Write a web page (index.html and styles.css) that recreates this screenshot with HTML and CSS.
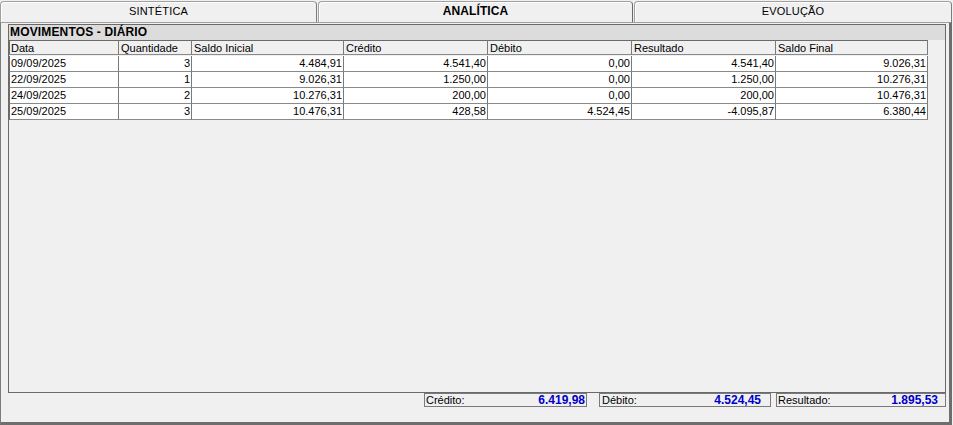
FILE: index.html
```html
<!DOCTYPE html>
<html lang="pt-BR">
<head>
<meta charset="utf-8">
<title>Movimentos - Diário</title>
<link rel="stylesheet" href="styles.css">
</head>
<body>
<div class="tabs">
  <div class="tab tab-1">SINTÉTICA</div>
  <div class="tab tab-2 active">ANALÍTICA</div>
  <div class="tab tab-3">EVOLUÇÃO</div>
</div>
<div class="panel">
  <div class="group">
    <div class="group-title">MOVIMENTOS - DIÁRIO</div>
    <div class="grid">
      <div class="cell head first">Data</div>
      <div class="cell head">Quantidade</div>
      <div class="cell head">Saldo Inicial</div>
      <div class="cell head">Crédito</div>
      <div class="cell head">Débito</div>
      <div class="cell head">Resultado</div>
      <div class="cell head">Saldo Final</div>

      <div class="cell first">09/09/2025</div>
      <div class="cell num">3</div>
      <div class="cell num">4.484,91</div>
      <div class="cell num">4.541,40</div>
      <div class="cell num">0,00</div>
      <div class="cell num">4.541,40</div>
      <div class="cell num">9.026,31</div>

      <div class="cell first">22/09/2025</div>
      <div class="cell num">1</div>
      <div class="cell num">9.026,31</div>
      <div class="cell num">1.250,00</div>
      <div class="cell num">0,00</div>
      <div class="cell num">1.250,00</div>
      <div class="cell num">10.276,31</div>

      <div class="cell first">24/09/2025</div>
      <div class="cell num">2</div>
      <div class="cell num">10.276,31</div>
      <div class="cell num">200,00</div>
      <div class="cell num">0,00</div>
      <div class="cell num">200,00</div>
      <div class="cell num">10.476,31</div>

      <div class="cell first">25/09/2025</div>
      <div class="cell num">3</div>
      <div class="cell num">10.476,31</div>
      <div class="cell num">428,58</div>
      <div class="cell num">4.524,45</div>
      <div class="cell num">-4.095,87</div>
      <div class="cell num">6.380,44</div>
    </div>
  </div>
  <div class="totals">
    <div class="total total-credito"><span class="total-label">Crédito:</span><span class="total-value">6.419,98</span></div>
    <div class="total total-debito"><span class="total-label">Débito:</span><span class="total-value">4.524,45</span></div>
    <div class="total total-resultado"><span class="total-label">Resultado:</span><span class="total-value">1.895,53</span></div>
  </div>
</div>
</body>
</html>
```
FILE: styles.css
```css
* { box-sizing: border-box; }

html, body {
  margin: 0;
  padding: 0;
}

body {
  width: 953px;
  height: 425px;
  overflow: hidden;
  background: #f0f0f0;
  font-family: "Liberation Sans", Arial, sans-serif;
  font-size: 11px;
  color: #000;
}

/* ---------- tabs ---------- */
.tabs {
  display: flex;
  height: 22px;
  padding-top: 1px;
}

.tab {
  height: 21px;
  border: 1px solid #a0a0a0;
  border-right-color: #7c7c7c;
  border-bottom: none;
  border-radius: 4px 4px 0 0;
  background: #f0f0f0;
  box-shadow: inset 1px 1px 0 #ffffff;
  text-align: center;
  padding-top: 1px;
  line-height: 17px;
  font-size: 11px;
  letter-spacing: 0.2px;
}

.tab-1 { width: 317px; margin-right: 1px; }
.tab-2 { width: 315px; margin-right: 1px; }
.tab-3 { width: 318px; }

.tab.active {
  font-weight: bold;
  font-size: 12px;
  letter-spacing: 0.1px;
  border-right-color: #696969;
}

/* ---------- panel ---------- */
.panel {
  width: 952px;
  height: 403px;
  border-top: 1px solid #a0a0a0;
  border-left: 1px solid #7c7c7c;
  border-right: 3px solid #6e6e6e;
  border-bottom: 3px solid #6e6e6e;
  background: #f0f0f0;
}

.group {
  width: 938px;
  height: 369px;
  margin: 1px 0 0 7px;
  border: 1px solid #6a6a6a;
}

.group-title {
  height: 15px;
  line-height: 15px;
  padding-left: 1px;
  background: #dcdcdc;
  font-weight: bold;
  font-size: 12px;
  letter-spacing: 0.15px;
  white-space: nowrap;
}

/* ---------- grid ---------- */
.grid {
  display: grid;
  grid-template-columns: 110px 73px 152px 144px 144px 144px 152px;
  grid-auto-rows: 16px;
  width: 919px;
}

.cell {
  height: 16px;
  line-height: 15px;
  border-right: 1px solid #7a7a7a;
  border-bottom: 1px solid #8a8a8a;
  background: #ffffff;
  padding: 0 1px 0 2px;
  white-space: nowrap;
  overflow: hidden;
}

.cell.first { border-left: 1px solid #6a6a6a; padding-left: 1px; }

.cell.head {
  height: 15px;
  line-height: 14px;
  border-top: 1px solid #6a6a6a;
  background: #f0f0f0;
}

.cell.num { text-align: right; }

/* ---------- totals ---------- */
.totals {
  display: flex;
  height: 14px;
  margin-left: 423px;
}

.total {
  display: flex;
  justify-content: space-between;
  height: 14px;
  border: 1px solid #7a7a7a;
  padding-left: 1px;
  line-height: 12px;
  background: #f0f0f0;
}

.total-credito { width: 163px; margin-right: 12px; padding-right: 1px; }
.total-debito { width: 172px; margin-right: 5px; padding-right: 9px; padding-left: 2px; }
.total-resultado { width: 170px; padding-right: 7px; }

.total-value {
  font-weight: bold;
  font-size: 12px;
  color: #0000c8;
}
```
